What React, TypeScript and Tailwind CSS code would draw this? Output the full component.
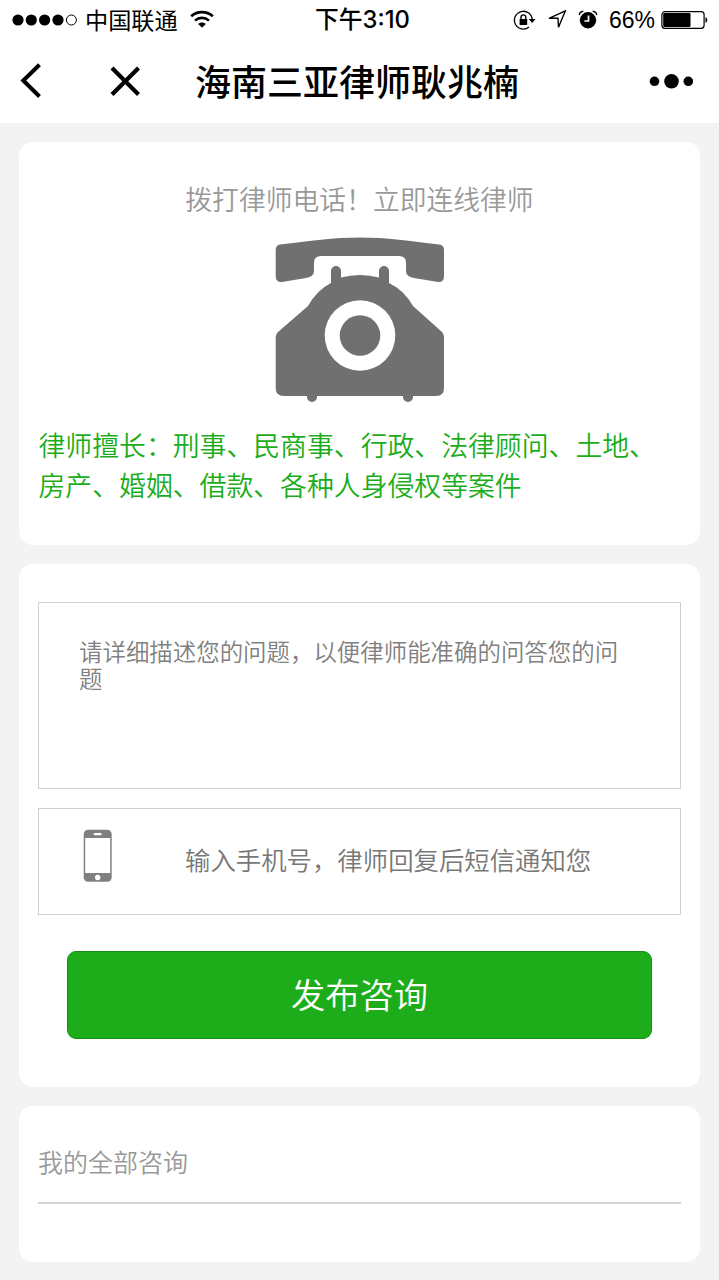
import type { ReactNode } from "react";

function StatusBar() {
  return (
    <div className="flex h-10 items-center text-black">
      <div className="flex w-[315px] items-center pl-3">
        <svg className="h-3 w-[66px] shrink-0" viewBox="0 0 66 12">
          <circle cx="6" cy="6" r="5.6" />
          <circle cx="19.3" cy="6" r="5.6" />
          <circle cx="32.6" cy="6" r="5.6" />
          <circle cx="46" cy="6" r="5.6" />
          <circle cx="59.4" cy="6" r="5" fill="none" stroke="#000" strokeWidth="1" />
        </svg>
        <span className="ml-[7px] pb-0.5 text-[23.2px] leading-[38px]">中国联通</span>
        <svg className="-mt-0.5 ml-3 h-[18px] w-6 shrink-0" viewBox="0 0 24 18">
          <path
            d="M1.2 6.2C7.4 .8 16.6 .8 22.8 6.2"
            fill="none"
            stroke="#000"
            strokeWidth="2.8"
          />
          <path
            d="M5 10.6C9 7 15 7 19 10.6"
            fill="none"
            stroke="#000"
            strokeWidth="2.6"
          />
          <path d="M8.2 14C10.3 12 13.7 12 15.8 14L12 17.8Z" />
        </svg>
      </div>

      <span className="font-[Inter,'Noto_Sans_CJK_SC',sans-serif] text-[23.8px] leading-10 font-medium whitespace-nowrap">
        下午3:10
      </span>

      <div className="ml-auto flex items-center pr-[11px]">
        {/* rotation lock */}
        <svg className="h-5 w-[23px]" viewBox="0 0 23 20">
          <path
            d="M19.2 10A8.9 8.9 0 1 0 16 17"
            fill="none"
            stroke="#000"
            strokeWidth="1.3"
          />
          <path d="M15.8 9H22.6L19.2 13Z" />
          <rect x="6.6" y="9" width="7.6" height="6" rx=".6" />
          <path d="M8 9.5V7.3a2.4 2.4 0 0 1 4.8 0V9.5" fill="none" stroke="#000" strokeWidth="1.4" />
        </svg>
        {/* location */}
        <svg className="ml-[11px] h-5 w-[20px]" viewBox="0 0 20 20">
          <path
            d="M2 8.3L18.3 .9L11.5 17.3L11 8.3Z"
            fill="none"
            stroke="#000"
            strokeWidth="1.4"
          />
        </svg>
        {/* alarm */}
        <svg className="ml-[11px] h-5 w-5" viewBox="0 0 20 20">
          <circle cx="10" cy="10.2" r="8.2" />
          <path d="M1.2 5C1.6 2.8 3.2 1.5 5.3 1.3M18.8 5C18.4 2.8 16.8 1.5 14.7 1.3" fill="none" stroke="#000" strokeWidth="1.4" />
          <path d="M10.5 5.5V11H6.4" fill="none" stroke="#fff" strokeWidth="1.7" />
        </svg>
        <span className="ml-[11px] font-['Liberation_Sans',sans-serif] text-[23px] leading-10">
          66%
        </span>
        <svg className="ml-1.5 h-5 w-[47px]" viewBox="0 0 47 20">
          <rect x=".9" y="1.7" width="42.2" height="16.6" rx="3" fill="#fff" stroke="#000" strokeWidth="1.2" />
          <rect x="2.2" y="3" width="27.3" height="14" rx="1.2" />
          <path d="M44.5 7.2C46.8 7.6 46.8 12.4 44.5 12.8Z" />
        </svg>
      </div>
    </div>
  );
}

function NavBar() {
  return (
    <div className="flex h-[81px] items-center">
      <button type="button" className="ml-[19px]">
        <svg className="h-9 w-6" viewBox="0 0 24 36" fill="none" stroke="#000" strokeWidth="4">
          <path d="M20.5 1.8L4.3 17.5L20.5 33.5" />
        </svg>
      </button>
      <button type="button" className="ml-[67px]">
        <svg className="h-8 w-8" viewBox="0 0 32 32" fill="none" stroke="#000" strokeWidth="4.2">
          <path d="M2 3L28.5 29.5M28.5 3L2 29.5" />
        </svg>
      </button>
      <h1 className="ml-[53px] pb-0.5 text-[36px] leading-[52px] font-medium whitespace-nowrap">
        海南三亚律师耿兆楠
      </h1>
      <button type="button" className="mr-[26px] ml-auto">
        <svg className="h-4 w-11" viewBox="0 0 44 16">
          <circle cx="5.5" cy="8.3" r="4.8" />
          <circle cx="22.5" cy="8.3" r="7.3" />
          <circle cx="39.3" cy="8.3" r="4.8" />
        </svg>
      </button>
    </div>
  );
}

function TelephoneIcon() {
  return (
    <svg className="h-[166px] w-[170px]" viewBox="0 0 170 166" fill="#707070">
      <path d="M5 7.5C35 4 58 .5 85 .5S135 4 164 7.5Q169 8.2 169 13V39Q169 45.5 163 45L139 41Q131 39.5 131 34V26Q131 19 124 19H46Q39 19 39 26V34Q39 39.5 31 41L7 45Q.7 45.5 .7 39V13Q.7 8.2 5 7.5Z" />
      <path
        fillRule="evenodd"
        d="M56 46V34a5 5 0 0 1 10 0V40.5Q85 35.5 104 40.5V34a5 5 0 0 1 10 0V46Q129 53 138 69L167 95Q169 97 169 100V151Q169 159 161 159H138V160a5 5 0 0 1-10 0V159H42V160a5 5 0 0 1-10 0V159H9Q.7 159 .7 151V100Q.7 97 3 95L33 69Q42 53 56 46ZM85 63.2a35.3 35.3 0 1 0 0 70.6a35.3 35.3 0 1 0 0-70.6Z"
      />
      <circle cx="85" cy="98.5" r="20.3" />
    </svg>
  );
}

function MobileIcon() {
  return (
    <svg className="h-[54px] w-[30px]" viewBox="0 0 30 54">
      <rect x=".7" y=".7" width="28" height="52" rx="4.5" fill="#808080" />
      <rect x="2.2" y="9" width="25" height="35" fill="#fff" />
      <rect x="10.7" y="4" width="8" height="2.2" rx="1" fill="#fff" />
      <circle cx="14.7" cy="48.5" r="2.7" fill="#fff" />
    </svg>
  );
}

function Card({ className, children }: { className: string; children: ReactNode }) {
  return (
    <section className={`flex flex-col rounded-[14px] bg-white px-[19px] ${className}`}>
      {children}
    </section>
  );
}

export default function App() {
  return (
    <div className="flex h-[1280px] w-[719px] flex-col overflow-hidden bg-[#f3f3f3] font-['Noto_Sans_CJK_SC',sans-serif]">
      <header className="h-[123px] shrink-0 bg-white">
        <StatusBar />
        <NavBar />
      </header>

      <main className="flex flex-col gap-[19px] px-[19px] pt-[19px]">
        <Card className="h-[403px] items-center pt-[37px]">
          <p className="text-[26.8px] leading-10 font-[350] text-[#999]">
            拨打律师电话！立即连线律师
          </p>
          <div className="mt-[18px]">
            <TelephoneIcon />
          </div>
          <p className="mt-[22px] w-full pl-[0.5px] text-[26.85px] leading-10 font-[350] text-[#1aad19]">
            律师擅长：刑事、民商事、行政、法律顾问、土地、房产、婚姻、借款、各种人身侵权等案件
          </p>
        </Card>

        <Card className="h-[523px] pt-[38px]">
          <div className="h-[187px] border border-[#d0d0d0] px-[39px] pt-[35px]">
            <p className="pl-px text-[23.45px] leading-[27px] font-[350] text-[#808080]">
              请详细描述您的问题，以便律师能准确的问答您的问题
            </p>
          </div>
          <div className="mt-[19px] flex h-[107px] items-center border border-[#d0d0d0] pl-[44px]">
            <div className="-mt-[11px]">
              <MobileIcon />
            </div>
            <p className="-mt-[5px] ml-[72px] text-[25.4px] leading-10 font-[350] text-[#777]">
              输入手机号，律师回复后短信通知您
            </p>
          </div>
          <button
            type="button"
            className="mx-[29px] mt-9 h-[88px] rounded-[9px] border border-[#168f15] bg-[#1dad1b] pb-1 text-[34.3px] leading-none font-[350] text-white"
          >
            发布咨询
          </button>
        </Card>

        <Card className="h-[156px] pt-[35px]">
          <div className="h-[63px] border-b-2 border-[#d5d5d5]">
            <h2 className="text-[25px] leading-10 font-[350] text-[#999]">我的全部咨询</h2>
          </div>
        </Card>
      </main>
    </div>
  );
}
